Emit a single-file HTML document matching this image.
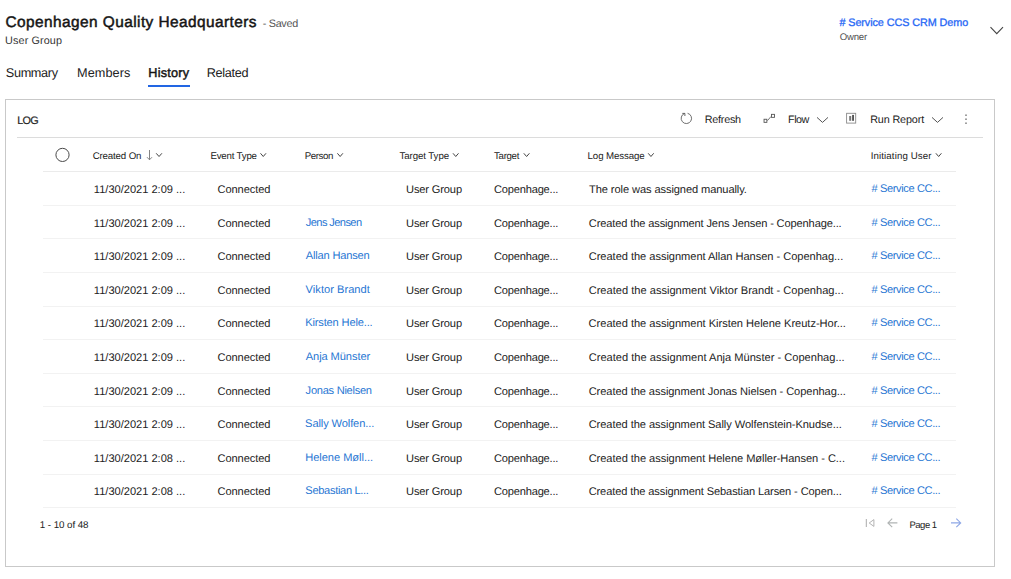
<!DOCTYPE html>
<html><head><meta charset="utf-8"><title>Copenhagen Quality Headquarters</title>
<style>
*{box-sizing:border-box;margin:0;padding:0}
html,body{width:1011px;height:579px;background:#fff;overflow:hidden}
body{font-family:"Liberation Sans",sans-serif;color:#333;position:relative;text-rendering:geometricPrecision}
.t{position:absolute;white-space:nowrap;line-height:16px;display:block}
.ic{position:absolute;overflow:visible}
#panel{position:absolute;left:5px;top:99px;width:990px;height:468px;border:1px solid #c9c9c9}
.ln{position:absolute;height:1px}
</style></head><body>
<div id="panel"></div>
<div class="ln" style="left:17px;top:137px;width:966px;background:#dcdcdc"></div>
<div class="ln" style="left:43px;top:171px;width:913px;background:#ebebeb"></div>
<div class="ln" style="left:43px;top:205px;width:913px;background:#f2f2f2"></div>
<div class="ln" style="left:43px;top:238px;width:913px;background:#f2f2f2"></div>
<div class="ln" style="left:43px;top:272px;width:913px;background:#f2f2f2"></div>
<div class="ln" style="left:43px;top:306px;width:913px;background:#f2f2f2"></div>
<div class="ln" style="left:43px;top:339px;width:913px;background:#f2f2f2"></div>
<div class="ln" style="left:43px;top:373px;width:913px;background:#f2f2f2"></div>
<div class="ln" style="left:43px;top:406px;width:913px;background:#f2f2f2"></div>
<div class="ln" style="left:43px;top:440px;width:913px;background:#f2f2f2"></div>
<div class="ln" style="left:43px;top:474px;width:913px;background:#f2f2f2"></div>
<div class="ln" style="left:43px;top:507px;width:913px;background:#f2f2f2"></div>
<div style="position:absolute;left:148px;top:84.5px;width:42px;height:2px;background:#2266e3"></div>
<div class="t" id="title" style="left:5.55px;top:15.00px;font-size:15.4px;letter-spacing:0.438px;color:#141414;-webkit-text-stroke:0.48px #141414">Copenhagen Quality Headquarters</div>
<div class="t" id="saved" style="left:262.66px;top:16.00px;font-size:10.8px;letter-spacing:-0.272px;color:#555">- Saved</div>
<div class="t" id="sub" style="left:5.11px;top:32.51px;font-size:10.8px;letter-spacing:0.114px;color:#333">User Group</div>
<div class="t" id="owner" style="left:839.40px;top:14.90px;font-size:10.8px;letter-spacing:-0.067px;color:#1f66f5;-webkit-text-stroke:0.3px #1f66f5"># Service CCS CRM Demo</div>
<div class="t" id="ownerl" style="left:839.68px;top:29.90px;font-size:9.6px;letter-spacing:-0.208px;color:#505050">Owner</div>
<div class="t" id="tab1" style="left:5.79px;top:64.60px;font-size:12.7px;letter-spacing:-0.332px;color:#222">Summary</div>
<div class="t" id="tab2" style="left:77.10px;top:64.60px;font-size:12.7px;letter-spacing:0.063px;color:#222">Members</div>
<div class="t" id="tab3" style="left:148.32px;top:64.60px;font-size:12.7px;letter-spacing:0.216px;color:#141414;-webkit-text-stroke:0.45px #141414">History</div>
<div class="t" id="tab4" style="left:206.64px;top:64.60px;font-size:12.7px;letter-spacing:-0.296px;color:#222">Related</div>
<div class="t" id="log" style="left:17.31px;top:113.00px;font-size:10.8px;letter-spacing:-0.745px;color:#222;-webkit-text-stroke:0.2px #222">LOG</div>
<div class="t" id="refresh" style="left:704.85px;top:111.80px;font-size:10.8px;letter-spacing:-0.266px;color:#222">Refresh</div>
<div class="t" id="flow" style="left:788.10px;top:111.80px;font-size:10.8px;letter-spacing:-0.502px;color:#222">Flow</div>
<div class="t" id="runrep" style="left:870.18px;top:111.80px;font-size:10.8px;letter-spacing:-0.132px;color:#222">Run Report</div>
<div class="t" id="h1" style="left:92.64px;top:149.00px;font-size:9.7px;letter-spacing:-0.138px;color:#222">Created On</div>
<div class="t" id="h2" style="left:210.42px;top:149.00px;font-size:9.7px;letter-spacing:-0.192px;color:#222">Event Type</div>
<div class="t" id="h3" style="left:304.79px;top:149.00px;font-size:9.7px;letter-spacing:-0.420px;color:#222">Person</div>
<div class="t" id="h4" style="left:399.44px;top:149.00px;font-size:9.7px;letter-spacing:-0.080px;color:#222">Target Type</div>
<div class="t" id="h5" style="left:494.08px;top:149.00px;font-size:9.7px;letter-spacing:-0.332px;color:#222">Target</div>
<div class="t" id="h6" style="left:587.58px;top:149.00px;font-size:9.7px;letter-spacing:-0.106px;color:#222">Log Message</div>
<div class="t" id="h7" style="left:870.73px;top:149.00px;font-size:9.7px;letter-spacing:0.115px;color:#222">Initiating User</div>
<div class="t" id="r0d" style="left:93.84px;top:182.01px;font-size:11.1px;letter-spacing:-0.017px;color:#222">11/30/2021 2:09 ...</div>
<div class="t" id="r0e" style="left:217.49px;top:182.01px;font-size:11.1px;letter-spacing:-0.082px;color:#222">Connected</div>
<div class="t" id="r0t" style="left:406.06px;top:182.01px;font-size:11.1px;letter-spacing:-0.148px;color:#222">User Group</div>
<div class="t" id="r0c" style="left:493.98px;top:182.01px;font-size:11.1px;letter-spacing:-0.195px;color:#222">Copenhage...</div>
<div class="t" id="r0m" style="left:589.04px;top:182.01px;font-size:11.1px;letter-spacing:-0.094px;color:#222">The role was assigned manually.</div>
<div class="t" id="r0u" style="left:871.59px;top:181.01px;font-size:11.1px;letter-spacing:-0.398px;color:#1f76d3"># Service CC...</div>
<div class="t" id="r1d" style="left:93.84px;top:216.01px;font-size:11.1px;letter-spacing:-0.017px;color:#222">11/30/2021 2:09 ...</div>
<div class="t" id="r1e" style="left:217.49px;top:216.01px;font-size:11.1px;letter-spacing:-0.082px;color:#222">Connected</div>
<div class="t" id="r1p" style="left:305.87px;top:215.01px;font-size:11.1px;letter-spacing:-0.609px;color:#1f76d3">Jens Jensen</div>
<div class="t" id="r1t" style="left:406.06px;top:216.01px;font-size:11.1px;letter-spacing:-0.148px;color:#222">User Group</div>
<div class="t" id="r1c" style="left:493.98px;top:216.01px;font-size:11.1px;letter-spacing:-0.195px;color:#222">Copenhage...</div>
<div class="t" id="r1m" style="left:588.86px;top:216.01px;font-size:11.1px;letter-spacing:-0.142px;color:#222">Created the assignment Jens Jensen - Copenhage...</div>
<div class="t" id="r1u" style="left:871.59px;top:215.01px;font-size:11.1px;letter-spacing:-0.398px;color:#1f76d3"># Service CC...</div>
<div class="t" id="r2d" style="left:93.84px;top:249.00px;font-size:11.1px;letter-spacing:-0.017px;color:#222">11/30/2021 2:09 ...</div>
<div class="t" id="r2e" style="left:217.49px;top:249.00px;font-size:11.1px;letter-spacing:-0.082px;color:#222">Connected</div>
<div class="t" id="r2p" style="left:305.86px;top:248.00px;font-size:11.1px;letter-spacing:-0.198px;color:#1f76d3">Allan Hansen</div>
<div class="t" id="r2t" style="left:406.06px;top:249.00px;font-size:11.1px;letter-spacing:-0.148px;color:#222">User Group</div>
<div class="t" id="r2c" style="left:493.98px;top:249.00px;font-size:11.1px;letter-spacing:-0.195px;color:#222">Copenhage...</div>
<div class="t" id="r2m" style="left:588.76px;top:249.00px;font-size:11.1px;letter-spacing:-0.043px;color:#222">Created the assignment Allan Hansen - Copenhag...</div>
<div class="t" id="r2u" style="left:871.59px;top:248.00px;font-size:11.1px;letter-spacing:-0.398px;color:#1f76d3"># Service CC...</div>
<div class="t" id="r3d" style="left:93.84px;top:283.01px;font-size:11.1px;letter-spacing:-0.017px;color:#222">11/30/2021 2:09 ...</div>
<div class="t" id="r3e" style="left:217.49px;top:283.01px;font-size:11.1px;letter-spacing:-0.082px;color:#222">Connected</div>
<div class="t" id="r3p" style="left:305.60px;top:282.01px;font-size:11.1px;letter-spacing:0.024px;color:#1f76d3">Viktor Brandt</div>
<div class="t" id="r3t" style="left:406.06px;top:283.01px;font-size:11.1px;letter-spacing:-0.148px;color:#222">User Group</div>
<div class="t" id="r3c" style="left:493.98px;top:283.01px;font-size:11.1px;letter-spacing:-0.195px;color:#222">Copenhage...</div>
<div class="t" id="r3m" style="left:588.67px;top:283.01px;font-size:11.1px;letter-spacing:-0.000px;color:#222">Created the assignment Viktor Brandt - Copenhag...</div>
<div class="t" id="r3u" style="left:871.59px;top:282.01px;font-size:11.1px;letter-spacing:-0.398px;color:#1f76d3"># Service CC...</div>
<div class="t" id="r4d" style="left:93.84px;top:316.00px;font-size:11.1px;letter-spacing:-0.017px;color:#222">11/30/2021 2:09 ...</div>
<div class="t" id="r4e" style="left:217.49px;top:316.00px;font-size:11.1px;letter-spacing:-0.082px;color:#222">Connected</div>
<div class="t" id="r4p" style="left:305.16px;top:315.00px;font-size:11.1px;letter-spacing:-0.155px;color:#1f76d3">Kirsten Hele...</div>
<div class="t" id="r4t" style="left:406.06px;top:316.00px;font-size:11.1px;letter-spacing:-0.148px;color:#222">User Group</div>
<div class="t" id="r4c" style="left:493.98px;top:316.00px;font-size:11.1px;letter-spacing:-0.195px;color:#222">Copenhage...</div>
<div class="t" id="r4m" style="left:588.61px;top:316.00px;font-size:11.1px;letter-spacing:-0.034px;color:#222">Created the assignment Kirsten Helene Kreutz-Hor...</div>
<div class="t" id="r4u" style="left:871.59px;top:315.00px;font-size:11.1px;letter-spacing:-0.398px;color:#1f76d3"># Service CC...</div>
<div class="t" id="r5d" style="left:93.84px;top:350.01px;font-size:11.1px;letter-spacing:-0.017px;color:#222">11/30/2021 2:09 ...</div>
<div class="t" id="r5e" style="left:217.49px;top:350.01px;font-size:11.1px;letter-spacing:-0.082px;color:#222">Connected</div>
<div class="t" id="r5p" style="left:305.75px;top:349.01px;font-size:11.1px;letter-spacing:-0.085px;color:#1f76d3">Anja Münster</div>
<div class="t" id="r5t" style="left:406.06px;top:350.01px;font-size:11.1px;letter-spacing:-0.148px;color:#222">User Group</div>
<div class="t" id="r5c" style="left:493.98px;top:350.01px;font-size:11.1px;letter-spacing:-0.195px;color:#222">Copenhage...</div>
<div class="t" id="r5m" style="left:588.72px;top:350.01px;font-size:11.1px;letter-spacing:0.001px;color:#222">Created the assignment Anja Münster - Copenhag...</div>
<div class="t" id="r5u" style="left:871.59px;top:349.01px;font-size:11.1px;letter-spacing:-0.398px;color:#1f76d3"># Service CC...</div>
<div class="t" id="r6d" style="left:93.84px;top:384.01px;font-size:11.1px;letter-spacing:-0.017px;color:#222">11/30/2021 2:09 ...</div>
<div class="t" id="r6e" style="left:217.49px;top:384.01px;font-size:11.1px;letter-spacing:-0.082px;color:#222">Connected</div>
<div class="t" id="r6p" style="left:305.62px;top:383.01px;font-size:11.1px;letter-spacing:-0.271px;color:#1f76d3">Jonas Nielsen</div>
<div class="t" id="r6t" style="left:406.06px;top:384.01px;font-size:11.1px;letter-spacing:-0.148px;color:#222">User Group</div>
<div class="t" id="r6c" style="left:493.98px;top:384.01px;font-size:11.1px;letter-spacing:-0.195px;color:#222">Copenhage...</div>
<div class="t" id="r6m" style="left:588.69px;top:384.01px;font-size:11.1px;letter-spacing:-0.075px;color:#222">Created the assignment Jonas Nielsen - Copenhag...</div>
<div class="t" id="r6u" style="left:871.59px;top:383.01px;font-size:11.1px;letter-spacing:-0.398px;color:#1f76d3"># Service CC...</div>
<div class="t" id="r7d" style="left:93.84px;top:417.00px;font-size:11.1px;letter-spacing:-0.017px;color:#222">11/30/2021 2:09 ...</div>
<div class="t" id="r7e" style="left:217.49px;top:417.00px;font-size:11.1px;letter-spacing:-0.082px;color:#222">Connected</div>
<div class="t" id="r7p" style="left:305.11px;top:416.00px;font-size:11.1px;letter-spacing:-0.112px;color:#1f76d3">Sally Wolfen...</div>
<div class="t" id="r7t" style="left:406.06px;top:417.00px;font-size:11.1px;letter-spacing:-0.148px;color:#222">User Group</div>
<div class="t" id="r7c" style="left:493.98px;top:417.00px;font-size:11.1px;letter-spacing:-0.195px;color:#222">Copenhage...</div>
<div class="t" id="r7m" style="left:588.68px;top:417.00px;font-size:11.1px;letter-spacing:-0.066px;color:#222">Created the assignment Sally Wolfenstein-Knudse...</div>
<div class="t" id="r7u" style="left:871.59px;top:416.00px;font-size:11.1px;letter-spacing:-0.398px;color:#1f76d3"># Service CC...</div>
<div class="t" id="r8d" style="left:93.84px;top:451.01px;font-size:11.1px;letter-spacing:-0.017px;color:#222">11/30/2021 2:08 ...</div>
<div class="t" id="r8e" style="left:217.49px;top:451.01px;font-size:11.1px;letter-spacing:-0.082px;color:#222">Connected</div>
<div class="t" id="r8p" style="left:305.21px;top:450.01px;font-size:11.1px;letter-spacing:-0.045px;color:#1f76d3">Helene Møll...</div>
<div class="t" id="r8t" style="left:406.06px;top:451.01px;font-size:11.1px;letter-spacing:-0.148px;color:#222">User Group</div>
<div class="t" id="r8c" style="left:493.98px;top:451.01px;font-size:11.1px;letter-spacing:-0.195px;color:#222">Copenhage...</div>
<div class="t" id="r8m" style="left:588.66px;top:451.01px;font-size:11.1px;letter-spacing:-0.054px;color:#222">Created the assignment Helene Møller-Hansen - C...</div>
<div class="t" id="r8u" style="left:871.59px;top:450.01px;font-size:11.1px;letter-spacing:-0.398px;color:#1f76d3"># Service CC...</div>
<div class="t" id="r9d" style="left:93.84px;top:484.00px;font-size:11.1px;letter-spacing:-0.017px;color:#222">11/30/2021 2:08 ...</div>
<div class="t" id="r9e" style="left:217.49px;top:484.00px;font-size:11.1px;letter-spacing:-0.082px;color:#222">Connected</div>
<div class="t" id="r9p" style="left:305.33px;top:483.00px;font-size:11.1px;letter-spacing:-0.326px;color:#1f76d3">Sebastian L...</div>
<div class="t" id="r9t" style="left:406.06px;top:484.00px;font-size:11.1px;letter-spacing:-0.148px;color:#222">User Group</div>
<div class="t" id="r9c" style="left:493.98px;top:484.00px;font-size:11.1px;letter-spacing:-0.195px;color:#222">Copenhage...</div>
<div class="t" id="r9m" style="left:588.64px;top:484.00px;font-size:11.1px;letter-spacing:-0.120px;color:#222">Created the assignment Sebastian Larsen - Copen...</div>
<div class="t" id="r9u" style="left:871.59px;top:483.00px;font-size:11.1px;letter-spacing:-0.398px;color:#1f76d3"># Service CC...</div>
<div class="t" id="count" style="left:39.87px;top:518.30px;font-size:9.8px;letter-spacing:-0.081px;color:#222">1 - 10 of 48</div>
<div class="t" id="page" style="left:909.49px;top:518.40px;font-size:9.5px;letter-spacing:-0.498px;color:#222">Page 1</div>
<svg class="ic" style="left:988px;top:25px" width="18" height="12" viewBox="0 0 18 12"><path d="M2.50 2.20 L8.75 8.60 L15.00 2.20" fill="none" stroke="#444" stroke-width="1.1"/></svg>
<svg class="ic" style="left:54px;top:147px" width="17" height="17" viewBox="0 0 17 17"><circle cx="8.5" cy="7.9" r="6.6" fill="none" stroke="#4a4a4a" stroke-width="1"/></svg>
<svg class="ic" style="left:144px;top:148px" width="12" height="14" viewBox="0 0 12 14"><path d="M5.5 2 V11.7 M3 9.2 L5.5 11.8 L8 9.2" fill="none" stroke="#777" stroke-width="0.9"/></svg>
<svg class="ic" style="left:154px;top:151px" width="11" height="9" viewBox="0 0 11 9"><path d="M2.20 2.30 L5.05 5.50 L7.90 2.30" fill="none" stroke="#444" stroke-width="1"/></svg>
<svg class="ic" style="left:258px;top:151px" width="11" height="9" viewBox="0 0 11 9"><path d="M2.50 2.30 L5.25 5.50 L8.00 2.30" fill="none" stroke="#444" stroke-width="1"/></svg>
<svg class="ic" style="left:335px;top:151px" width="11" height="9" viewBox="0 0 11 9"><path d="M2.40 2.30 L5.15 5.50 L7.90 2.30" fill="none" stroke="#444" stroke-width="1"/></svg>
<svg class="ic" style="left:451px;top:151px" width="11" height="9" viewBox="0 0 11 9"><path d="M2.00 2.30 L4.75 5.50 L7.50 2.30" fill="none" stroke="#444" stroke-width="1"/></svg>
<svg class="ic" style="left:521px;top:151px" width="11" height="9" viewBox="0 0 11 9"><path d="M2.80 2.30 L5.60 5.50 L8.40 2.30" fill="none" stroke="#444" stroke-width="1"/></svg>
<svg class="ic" style="left:646px;top:151px" width="11" height="9" viewBox="0 0 11 9"><path d="M2.20 2.30 L4.95 5.50 L7.70 2.30" fill="none" stroke="#444" stroke-width="1"/></svg>
<svg class="ic" style="left:933px;top:151px" width="11" height="9" viewBox="0 0 11 9"><path d="M2.90 2.30 L5.65 5.50 L8.40 2.30" fill="none" stroke="#444" stroke-width="1"/></svg>
<svg class="ic" style="left:678px;top:110px" width="17" height="17" viewBox="0 0 17 17"><path d="M9.6 3.3 A5.2 5.2 0 1 1 6.5 3.5" fill="none" stroke="#606060" stroke-width="0.9"/><path d="M4.3 3.4 H6.9 V6" fill="none" stroke="#555" stroke-width="0.9"/></svg>
<svg class="ic" style="left:761px;top:111px" width="17" height="15" viewBox="0 0 17 15"><rect x="3.05" y="8.25" width="2.8" height="3.1" fill="none" stroke="#555" stroke-width="0.9"/><rect x="10.45" y="3.35" width="3.1" height="3" fill="none" stroke="#555" stroke-width="0.9"/><path d="M6.4 9.7 L10 5.5" stroke="#666" stroke-width="0.9" fill="none"/></svg>
<svg class="ic" style="left:815px;top:115px" width="17" height="11" viewBox="0 0 17 11"><path d="M2.00 2.40 L7.50 7.40 L13.00 2.40" fill="none" stroke="#555" stroke-width="1"/></svg>
<svg class="ic" style="left:930px;top:115px" width="17" height="11" viewBox="0 0 17 11"><path d="M2.00 2.40 L7.50 7.40 L13.00 2.40" fill="none" stroke="#555" stroke-width="1"/></svg>
<svg class="ic" style="left:844px;top:111px" width="15" height="15" viewBox="0 0 15 15"><rect x="2.6" y="2.3" width="9.1" height="9.8" fill="none" stroke="#8a8a8a" stroke-width="0.9"/><rect x="5.2" y="5" width="2" height="4.8" fill="#777"/><rect x="8.1" y="3.9" width="1.9" height="5.9" fill="#555"/></svg>
<svg class="ic" style="left:963px;top:112px" width="6" height="14" viewBox="0 0 6 14"><rect x="2.3" y="2.5" width="1.4" height="1.4" fill="#666"/><rect x="2.3" y="6.5" width="1.4" height="1.4" fill="#666"/><rect x="2.3" y="10.5" width="1.4" height="1.4" fill="#666"/></svg>
<svg class="ic" style="left:863px;top:516px" width="14" height="14" viewBox="0 0 14 14"><path d="M3.3 3 V11" stroke="#aaa" stroke-width="1" fill="none"/><path d="M10.9 3.6 L6.2 7 L10.9 10.4 Z" stroke="#aaa" stroke-width="0.9" fill="none"/></svg>
<svg class="ic" style="left:885px;top:516px" width="15" height="14" viewBox="0 0 15 14"><path d="M12.4 6.9 H3 M7.2 2.6 L2.9 6.9 L7.2 11.2" stroke="#b0b4b4" stroke-width="1.1" fill="none"/></svg>
<svg class="ic" style="left:949px;top:516px" width="15" height="14" viewBox="0 0 15 14"><path d="M2 6.9 H11.6 M7.3 2.6 L11.7 6.9 L7.3 11.2" stroke="#8fa8e6" stroke-width="1.1" fill="none"/></svg>
</body></html>
